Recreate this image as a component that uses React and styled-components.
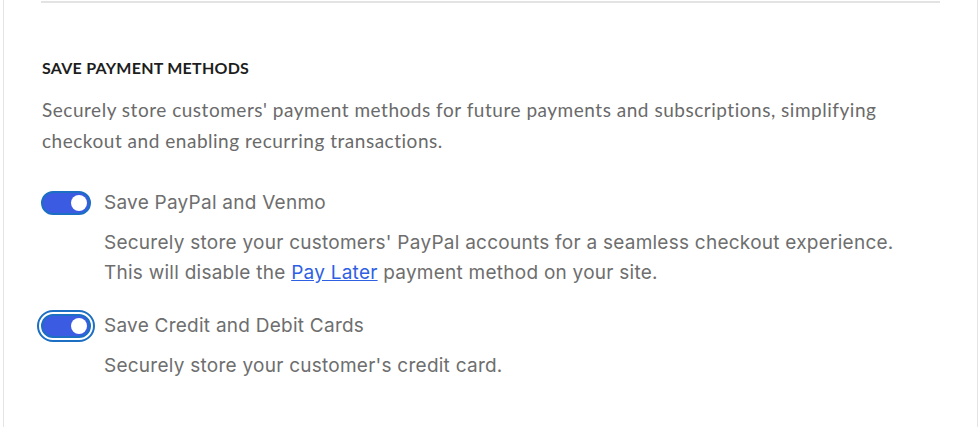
import React, { useState } from 'react';
import styled, { createGlobalStyle } from 'styled-components';

const GlobalStyle = createGlobalStyle`
  html, body {
    margin: 0;
    padding: 0;
    background: #ffffff;
  }
  body {
    font-family: "Lato", "Liberation Sans", sans-serif;
  }
`;

const Card = styled.section`
  margin: 0 2px 0 3px;
  min-height: 427px;
  box-sizing: border-box;
  border-left: 1px solid #e4e4e4;
  border-right: 1px solid #e4e4e4;
  padding: 1px 37px 0 38px;
`;

const Divider = styled.hr`
  margin: 0 0 0 -1px;
  border: 0;
  height: 2px;
  background: #e3e3e3;
`;

const Heading = styled.h3`
  margin: 55px 0 0;
  font-family: "Lato", "Liberation Sans", sans-serif;
  font-size: 16px;
  font-weight: 700;
  letter-spacing: 0.25px;
  color: #1d1d1d;
  line-height: 20px;
`;

const Intro = styled.p`
  margin: 16px 0 0;
  font-family: "Lato", "Liberation Sans", sans-serif;
  font-size: 19px;
  letter-spacing: 0.52px;
  line-height: 31px;
  color: #6a6a6a;
`;

const OptionList = styled.div`
  display: flex;
  flex-direction: column;
  gap: 25px;
  margin-top: 34px;
`;

const Option = styled.div`
  display: flex;
  flex-direction: column;
`;

const OptionRow = styled.label`
  display: flex;
  align-items: center;
  gap: 13px;
  height: 26px;
  cursor: pointer;
`;

const Track = styled.button`
  position: relative;
  width: 50px;
  height: 24px;
  flex: none;
  padding: 0;
  margin-left: -1px;
  border-radius: 12px;
  border: 2px solid #1c6fc2;
  background: ${p => (p.$on ? '#3b5be3' : '#c9c9c9')};
  cursor: pointer;
  outline: ${p => (p.$focused ? '2px solid #1c6fc2' : 'none')};
  outline-offset: 2px;
  box-sizing: border-box;
`;

const Thumb = styled.span`
  position: absolute;
  top: 2px;
  left: ${p => (p.$on ? '28px' : '2px')};
  width: 16px;
  height: 16px;
  border-radius: 50%;
  background: #ffffff;
`;

const OptionLabel = styled.span`
  font-family: "Inter", "Liberation Sans", sans-serif;
  font-size: 19px;
  letter-spacing: 0.25px;
  color: #6e6e6e;
  line-height: 26px;
`;

const OptionHelp = styled.p`
  margin: 12px 0 0 62px;
  font-family: "Inter", "Liberation Sans", sans-serif;
  font-size: 19px;
  letter-spacing: 0.25px;
  line-height: 30px;
  color: #6e6e6e;
`;

const Link = styled.a`
  color: #2f5fe3;
  text-decoration: underline;
`;

function Switch({ on, focused, onToggle }) {
  return (
    <Track type="button" role="switch" aria-checked={on} $on={on} $focused={focused} onClick={onToggle}>
      <Thumb $on={on} />
    </Track>
  );
}

export default function App() {
  const [paypal, setPaypal] = useState(true);
  const [cards, setCards] = useState(true);

  return (
    <>
      <GlobalStyle />
      <Card>
        <Divider />
        <Heading>SAVE PAYMENT METHODS</Heading>
        <Intro>
          Securely store customers' payment methods for future payments and subscriptions, simplifying
          <br />
          checkout and enabling recurring transactions.
        </Intro>
        <OptionList>
          <Option>
            <OptionRow>
              <Switch on={paypal} onToggle={() => setPaypal(!paypal)} />
              <OptionLabel>Save PayPal and Venmo</OptionLabel>
            </OptionRow>
            <OptionHelp>
              Securely store your customers' PayPal accounts for a seamless checkout experience.
              <br />
              This will disable the <Link href="#">Pay Later</Link> payment method on your site.
            </OptionHelp>
          </Option>
          <Option>
            <OptionRow>
              <Switch on={cards} focused onToggle={() => setCards(!cards)} />
              <OptionLabel>Save Credit and Debit Cards</OptionLabel>
            </OptionRow>
            <OptionHelp>Securely store your customer's credit card.</OptionHelp>
          </Option>
        </OptionList>
      </Card>
    </>
  );
}
